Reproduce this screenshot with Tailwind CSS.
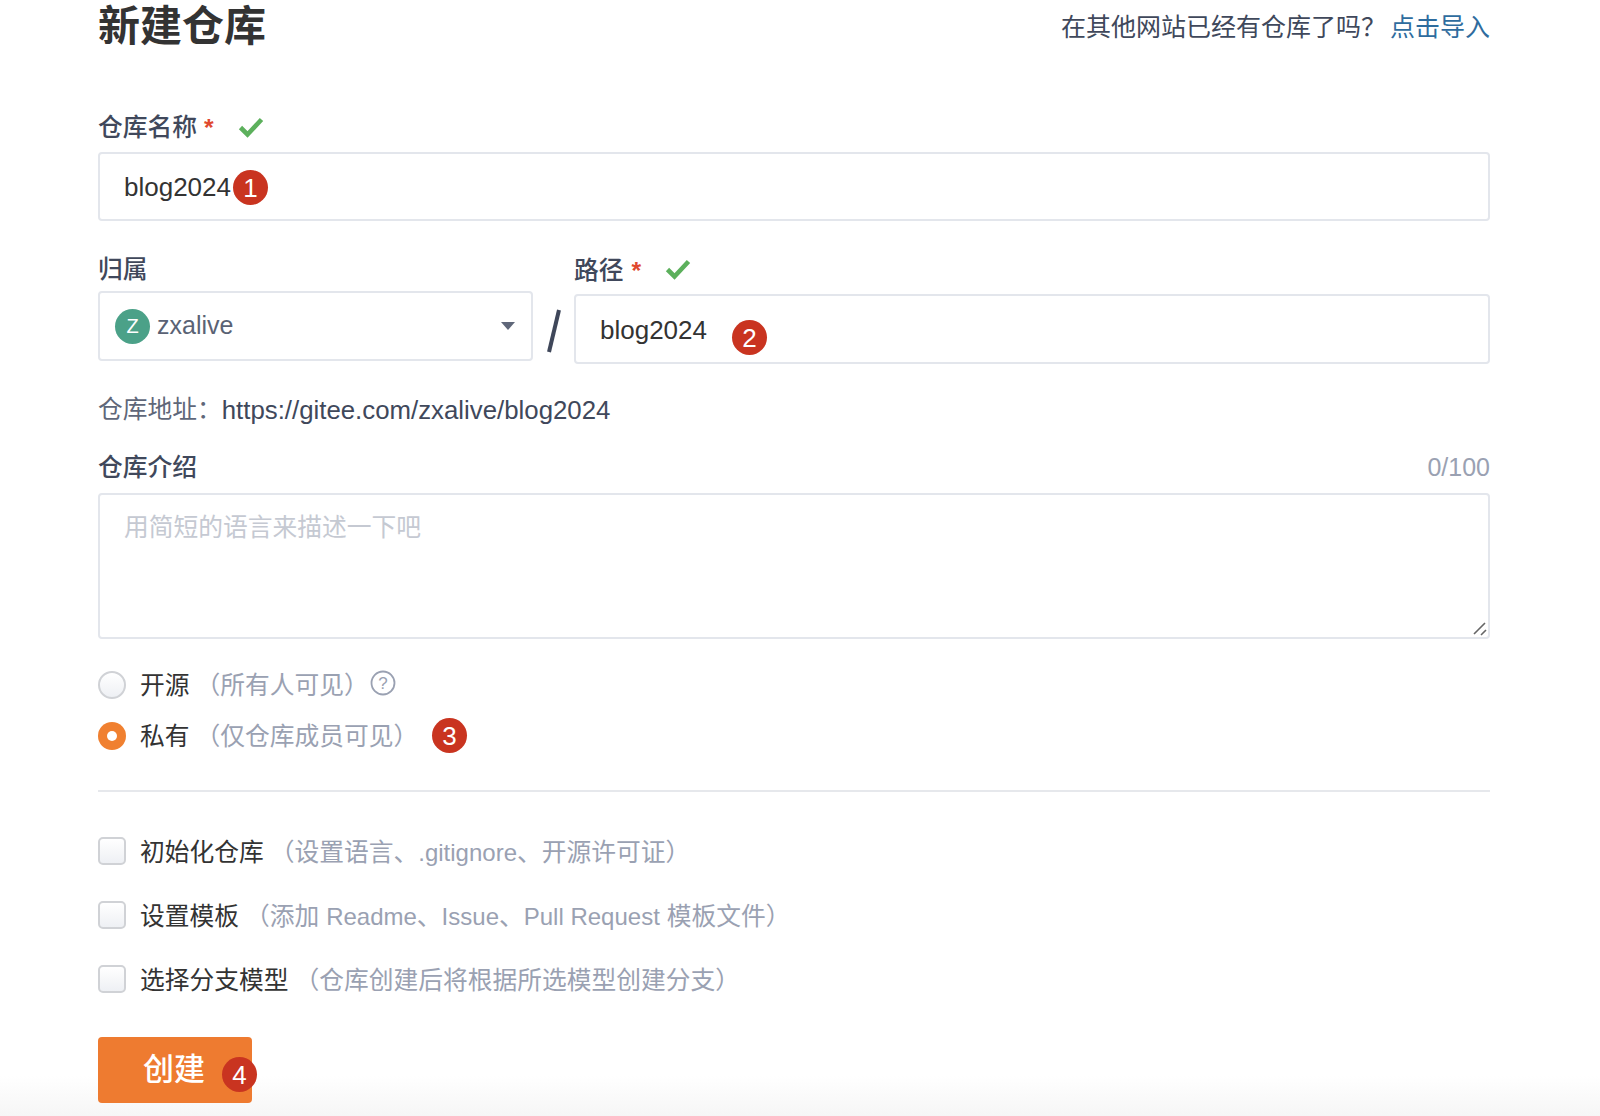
<!DOCTYPE html>
<html lang="zh-CN">
<head>
<meta charset="utf-8">
<title>新建仓库</title>
<script src="https://cdn.jsdelivr.net/npm/@tailwindcss/browser@4"></script>
</head>
<body class="bg-white">
<div class="relative w-[1600px] h-[1116px] overflow-hidden bg-white font-['Liberation_Sans','Noto_Sans_CJK_SC',sans-serif] text-[24.75px] text-[#40485b]">
  <div class="absolute left-0 right-0 bottom-0 h-[40px] bg-gradient-to-b from-white to-[#f6f6f6]"></div>
  <main class="relative ml-[98px] w-[1392px]">
    <header class="flex h-[50px] items-start justify-between">
      <h1 class="mt-[2px] text-[42px] leading-[50px] font-bold text-[#333]">新建仓库</h1>
      <p class="mt-[2px] text-[25px] leading-[50px] text-[#40485b]">在其他网站已经有仓库了吗？<a class="ml-[4px] text-[#2e6c9e]">点击导入</a></p>
    </header>

    <div class="mt-[58px] flex h-[36px] items-center">
      <label class="pt-[4px] font-medium text-[#40485b]">仓库名称</label>
      <span class="ml-[7px] pt-[4px] text-[#e0492f] font-bold">*</span>
      <svg class="ml-[24px] mt-[2px] w-[26px] h-[22px]" viewBox="0 0 26 22"><path d="M2.5 11.5 L9.5 18.5 L23.5 3.5" fill="none" stroke="#5cb05c" stroke-width="4.6"/></svg>
    </div>
    <div class="relative mt-[8px] flex h-[69px] items-center rounded-[4px] border-2 border-[#e3e6ec] pl-[24px] pt-[1px] text-[26px] text-[#333]">
      blog2024
      <span class="absolute left-[133px] top-[16px] flex h-[35px] w-[35px] items-center justify-center rounded-full bg-[#c93420] text-[26px] leading-none text-white">1</span>
    </div>

    <div class="mt-[29px] flex">
      <div class="w-[435px]">
        <div class="flex h-[36px] items-center pt-[4px] font-medium text-[#40485b]">归属</div>
        <div class="mt-[5px] flex h-[70px] items-center rounded-[4px] border-2 border-[#e3e6ec] pl-[15px] text-[25px] text-[#5a6274]">
          <span class="flex h-[35px] w-[35px] items-center justify-center rounded-full bg-[#4ba188] text-[20px] leading-none text-white">Z</span>
          <span class="ml-[7px]">zxalive</span>
          <svg class="ml-auto mr-[16px] w-[14px] h-[8px]" viewBox="0 0 14 8"><path d="M0 0 H14 L7 8 Z" fill="#5f6779"/></svg>
        </div>
      </div>
      <div class="flex w-[41px] items-end pb-[11px] pl-[14px]">
        <svg class="w-[14px] h-[44px]" viewBox="0 0 14 44"><path d="M12 1 L2 43" fill="none" stroke="#3f475a" stroke-width="4"/></svg>
      </div>
      <div class="flex-1">
        <div class="mt-[2px] flex h-[36px] items-center">
          <label class="pt-[2px] font-medium text-[#40485b]">路径</label>
          <span class="ml-[8px] pt-[2px] text-[#e0492f] font-bold">*</span>
          <svg class="ml-[24px] mt-[-2px] w-[26px] h-[22px]" viewBox="0 0 26 22"><path d="M2.5 11.5 L9.5 18.5 L23.5 3.5" fill="none" stroke="#5cb05c" stroke-width="4.6"/></svg>
        </div>
        <div class="relative mt-[6px] flex h-[70px] items-center rounded-[4px] border-2 border-[#e3e6ec] pl-[24px] pt-[2px] text-[26px] text-[#333]">
          blog2024
          <span class="absolute left-[156px] top-[24px] flex h-[35px] w-[35px] items-center justify-center rounded-full bg-[#c93420] text-[26px] leading-none text-white">2</span>
        </div>
      </div>
    </div>

    <p class="mt-[27px] flex h-[36px] items-center pt-[2px] text-[24.75px] text-[#5f6779]">仓库地址：<span class="text-[#40485b] text-[25.8px]">https://gitee.com/zxalive/blog2024</span></p>

    <div class="mt-[22px] flex h-[36px] items-center justify-between pt-[2px]">
      <label class="font-medium text-[#40485b]">仓库介绍</label>
      <span class="text-[#9aa1b2] text-[25px]">0/100</span>
    </div>
    <div class="relative mt-[8px] h-[146px] rounded-[4px] border-2 border-[#e3e6ec] px-[24px] pt-[16px] leading-[34px] text-[#c5c9d2]">
      用简短的语言来描述一下吧
      <svg class="absolute right-[1px] bottom-[1px] w-[14px] h-[14px]" viewBox="0 0 14 14"><path d="M1 12 L12 1 M8 13 L13 8" stroke="#666" stroke-width="1.6" fill="none"/></svg>
    </div>

    <div class="mt-[28px] flex h-[36px] items-center">
      <span class="h-[28px] w-[28px] rounded-full border-2 border-[#d0d2d6] bg-gradient-to-b from-white to-[#eef0f4]"></span>
      <span class="ml-[14px] pt-[2px] text-[#333]">开源</span>
      <span class="ml-[6px] pt-[2px] text-[#9aa1b2]">（所有人可见）</span>
      <svg class="ml-[1px] mt-[-4px] w-[26px] h-[26px]" viewBox="0 0 26 26"><circle cx="13" cy="13" r="11.5" fill="none" stroke="#9aa1b2" stroke-width="1.8"/><text x="13" y="19" font-size="17" text-anchor="middle" fill="#9aa1b2" font-family="Liberation Sans">?</text></svg>
    </div>
    <div class="relative mt-[15px] flex h-[36px] items-center">
      <span class="flex h-[28px] w-[28px] items-center justify-center rounded-full bg-[#f08030]"><span class="h-[10px] w-[10px] rounded-full bg-white"></span></span>
      <span class="ml-[14px] pt-[2px] text-[#333]">私有</span>
      <span class="ml-[6px] pt-[2px] text-[#9aa1b2]">（仅仓库成员可见）</span>
      <span class="absolute left-[334px] top-[0px] flex h-[35px] w-[35px] items-center justify-center rounded-full bg-[#c93420] text-[26px] leading-none text-white">3</span>
    </div>

    <hr class="mt-[36px] border-0 h-[2px] bg-[#e6e8ec]">

    <div class="mt-[41px] flex h-[36px] items-center">
      <span class="h-[28px] w-[28px] rounded-[5px] border-2 border-[#d0d2d6] bg-gradient-to-b from-white to-[#eef0f4]"></span>
      <span class="ml-[14px] pt-[4px] text-[#333]">初始化仓库</span>
      <span class="ml-[6px] pt-[4px] text-[#9aa1b2]">（设置语言、<span class="text-[24px]">.gitignore</span>、开源许可证）</span>
    </div>
    <div class="mt-[28px] flex h-[36px] items-center">
      <span class="h-[28px] w-[28px] rounded-[5px] border-2 border-[#d0d2d6] bg-gradient-to-b from-white to-[#eef0f4]"></span>
      <span class="ml-[14px] pt-[4px] text-[#333]">设置模板</span>
      <span class="ml-[6px] pt-[4px] text-[#9aa1b2]">（添加 <span class="text-[24px]">Readme</span>、<span class="text-[24px]">Issue</span>、<span class="text-[24px]">Pull Request</span> 模板文件）</span>
    </div>
    <div class="mt-[28px] flex h-[36px] items-center">
      <span class="h-[28px] w-[28px] rounded-[5px] border-2 border-[#d0d2d6] bg-gradient-to-b from-white to-[#eef0f4]"></span>
      <span class="ml-[14px] pt-[4px] text-[#333]">选择分支模型</span>
      <span class="ml-[6px] pt-[4px] text-[#9aa1b2]">（仓库创建后将根据所选模型创建分支）</span>
    </div>

    <button class="relative mt-[40px] flex h-[66px] w-[154px] items-center justify-center rounded-[4px] bg-[#ee7b30] text-[31px] font-medium text-white">
      <span class="pr-[2px]">创建</span>
      <span class="absolute left-[124px] top-[20px] flex h-[35px] w-[35px] items-center justify-center rounded-full bg-[#c93420] text-[26px] leading-none font-normal text-white">4</span>
    </button>
  </main>
</div>
</body>
</html>
